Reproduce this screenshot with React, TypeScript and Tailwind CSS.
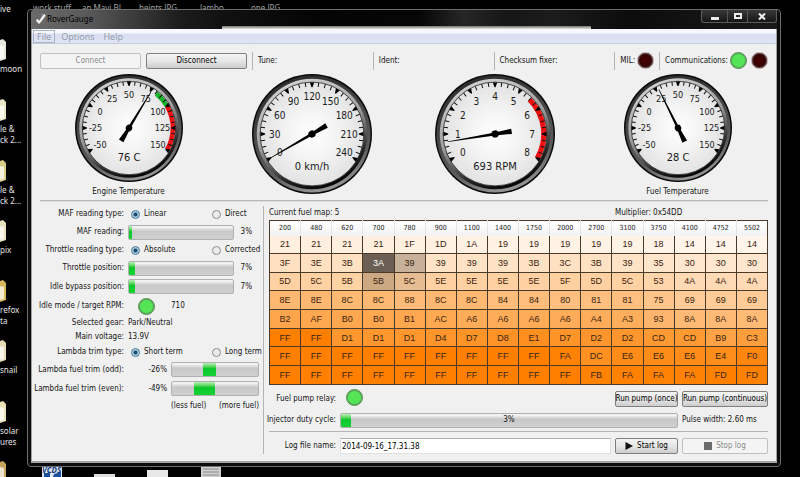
import type { ReactNode } from "react";

const UI = "font-['DejaVu_Sans_Condensed','Liberation_Sans',sans-serif]";

/* ---------- gauges ---------- */

type Band = { from: number; to: number; color: string };
type GaugeProps = {
  id: string;
  size: number;
  min: number;
  step: number;
  value: number;
  text: string;
  labelSize: number;
  bands?: Band[];
};

function polar(r: number, deg: number) {
  const a = ((deg - 90) * Math.PI) / 180;
  return { x: r * Math.cos(a), y: r * Math.sin(a) };
}

function bandPath(r1: number, r2: number, a: number, b: number) {
  const p = [polar(r2, a), polar(r2, b), polar(r1, b), polar(r1, a)];
  return `M${p[0].x} ${p[0].y} A${r2} ${r2} 0 0 1 ${p[1].x} ${p[1].y} L${p[2].x} ${p[2].y} A${r1} ${r1} 0 0 0 ${p[3].x} ${p[3].y} Z`;
}

function Gauge({ id, size, min, step, value, text, labelSize, bands = [] }: GaugeProps) {
  const R = size / 2;
  const angle = (v: number) => -120 + ((v - min) / step) * 30;
  const ticks = Array.from({ length: 33 }, (_, i) => i);
  const majors = Array.from({ length: 9 }, (_, i) => min + i * step);
  return (
    <svg width={size} height={size} viewBox={`${-R} ${-R} ${size} ${size}`} role="img" aria-label={text}>
      <defs>
        <linearGradient id={`${id}-rim`} x1="0.35" y1="0" x2="0.65" y2="1">
          <stop offset="0" stopColor="#2c2c2c" />
          <stop offset="0.45" stopColor="#4a4a4a" />
          <stop offset="0.75" stopColor="#5c5c5c" />
          <stop offset="1" stopColor="#9c9c9c" />
        </linearGradient>
        <linearGradient id={`${id}-bezel`} x1="0.3" y1="0" x2="0.7" y2="1">
          <stop offset="0" stopColor="#d2d2d2" />
          <stop offset="0.45" stopColor="#a0a0a0" />
          <stop offset="0.8" stopColor="#202020" />
          <stop offset="1" stopColor="#000000" />
        </linearGradient>
        <radialGradient id={`${id}-face`}>
          <stop offset="0" stopColor="#ffffff" />
          <stop offset="0.5" stopColor="#f3f3f3" />
          <stop offset="1" stopColor="#e2e2e2" />
        </radialGradient>
      </defs>
      <circle r={R} fill="#0a0a0a" />
      <circle r={R - 1.5} fill={`url(#${id}-rim)`} />
      <circle r={R * 0.92} fill={`url(#${id}-bezel)`} />
      <circle r={R * 0.865} fill={`url(#${id}-face)`} stroke="#222" strokeWidth="0.8" />
      {bands.map((b) => (
        <path key={b.from} d={bandPath(R * 0.77, R * 0.855, angle(b.from), angle(b.to))} fill={b.color} />
      ))}
      {ticks.map((i) => (
        <g key={i} transform={`rotate(${-120 + i * 7.5})`}>
          {i % 4 === 0 ? (
            <path d={`M-2.2 ${-R * 0.86} L2.2 ${-R * 0.86} L0.5 ${-R * 0.78} L-0.5 ${-R * 0.78} Z`} fill="#000" />
          ) : (
            <path d={`M0 ${-R * 0.86} V${-R * 0.79}`} stroke="#111" strokeWidth="1" />
          )}
        </g>
      ))}
      <g className={UI} fill="#1a1a1a" textAnchor="middle">
        {majors.map((m) => {
          const p = polar(R * 0.62, angle(m));
          return (
            <text key={m} x={p.x} y={p.y + labelSize * 0.36} fontSize={labelSize}>
              {m}
            </text>
          );
        })}
        <text y={R * 0.54 + 4} fontSize="11">
          {text}
        </text>
      </g>
      <g transform={`rotate(${angle(value)})`} fill="#000">
        <path d={`M-0.3 ${-R * 0.8} L0.3 ${-R * 0.8} L1.4 0 L2.6 ${R * 0.28} L-2.6 ${R * 0.28} L-1.4 0 Z`} />
        <circle r={R * 0.06} />
      </g>
    </svg>
  );
}

/* ---------- small controls ---------- */

function Led({ on }: { on?: boolean }) {
  return (
    <span
      className={`inline-block size-[17px] shrink-0 rounded-full border ${
        on
          ? "border-[#5c8a5c] bg-[#55e455] ring-1 ring-inset ring-[#5aa85a]"
          : "border-[#b9a5a5] bg-[radial-gradient(circle,#4a0000,#250000)] ring-1 ring-inset ring-[#5c4444]"
      }`}
    />
  );
}

function Btn({ children, disabled, className = "" }: { children: ReactNode; disabled?: boolean; className?: string }) {
  return (
    <button
      type="button"
      disabled={disabled}
      className={`flex h-4 items-center justify-center rounded-[2px] border whitespace-nowrap ${
        disabled
          ? "border-[#c0c0c0] bg-[#f4f4f4] text-[#8a8a8a]"
          : "border-[#808080] bg-linear-to-b from-[#f4f4f4] via-[#e6e6e6] to-[#cdcdcd] text-black"
      } ${className}`}
    >
      {children}
    </button>
  );
}

function Bar({ start = 0, width, label, children }: { start?: number; width: number; label: string; children?: ReactNode }) {
  return (
    <div
      role="progressbar"
      aria-label={label}
      className="relative h-[15px] flex-1 overflow-hidden rounded-[2px] border border-[#b0b0b0] bg-linear-to-b from-[#f2f2f2] from-10% via-[#c8c8c8] via-40% to-[#d0d0d0]"
    >
      <div
        className="absolute inset-y-0 bg-linear-to-b from-[#b4f0b4] via-[#0cc82c] via-40% to-[#14d234]"
        style={{ left: `${start}%`, width: `${width}%` }}
      />
      <div className="absolute inset-0 flex items-center justify-center">{children}</div>
    </div>
  );
}

function Row({ label, h, children }: { label: string; h: string; children: ReactNode }) {
  return (
    <div className={`flex items-center gap-1 ${h}`}>
      <span className="flex w-[84px] shrink-0 justify-end whitespace-nowrap">{label}</span>
      <div className="flex flex-1 items-center">{children}</div>
    </div>
  );
}

function Choice({ name, first, second }: { name: string; first: string; second: string }) {
  const dot =
    "size-[9px] shrink-0 appearance-none rounded-full border border-[#8c8c8c] bg-[#ececec] checked:border-[#4b7896] checked:bg-[radial-gradient(circle,#1d4a6b_30%,#a9d2e8_50%)]";
  return (
    <div className="flex flex-1 pl-[3px]">
      <label className="flex w-[81px] items-center gap-1 whitespace-nowrap">
        <input type="radio" name={name} defaultChecked className={dot} />
        {first}
      </label>
      <label className="flex items-center gap-1 whitespace-nowrap">
        <input type="radio" name={name} className={dot} />
        {second}
      </label>
    </div>
  );
}

function Divider() {
  return <span className="h-[18px] w-px shrink-0 bg-[#b4b4b4]" />;
}

/* ---------- fuel map ---------- */

const rpm = "200 480 620 700 780 900 1100 1400 1750 2000 2700 3100 3750 4100 4752 5502".split(" ");
const fuel = [
  "21 21 21 21 1F 1D 1A 19 19 19 19 19 18 14 14 14",
  "3F 3E 3B 3A 39 39 39 39 3B 3C 3B 39 35 30 30 30",
  "5D 5C 5B 5B 5C 5E 5E 5E 5E 5F 5D 5C 53 4A 4A 4A",
  "8E 8E 8C 8C 88 8C 8C 84 84 80 81 81 75 69 69 69",
  "B2 AF B0 B0 B1 AC A6 A6 A6 A6 A4 A3 93 8A 8A 8A",
  "FF FF D1 D1 D1 D4 D7 D8 E1 D7 D2 D2 CD CD B9 C3",
  "FF FF FF FF FF FF FF FF FF FA DC E6 E6 E6 E4 F0",
  "FF FF FF FF FF FF FF FF FF FF FB FA FA FA FD FD",
].map((r) => r.split(" "));

const shade: Record<string, number> = { "1-3": 0.58, "1-4": 0.22, "2-3": 0.2, "2-4": 0.1 };

function cellStyle(hex: string, key: string) {
  const v = parseInt(hex, 16);
  const k = 1 - (shade[key] ?? 0);
  const c = [255 * k, (255 - v / 2) * k, (255 - v) * k].map(Math.round);
  return { backgroundColor: `rgb(${c.join(",")})` };
}

function FuelMap() {
  return (
    <table className="h-[165px] w-full table-fixed border-collapse border border-[#4a3a2a]">
      <thead>
        <tr className="h-[15px] text-[7px] leading-[8px] text-[#222]">
          {rpm.map((r) => (
            <th key={r} className="border-r border-[#e4e4e4] bg-linear-to-b from-white to-[#f1f1f4] p-0 font-normal last:border-[#4a3a2a]">
              {r}
            </th>
          ))}
        </tr>
      </thead>
      <tbody className="font-['Liberation_Sans',Arial,sans-serif] text-[9px] leading-[10px] text-[#3a2410]">
        {fuel.map((row, y) => (
          <tr key={y}>
            {row.map((v, x) => (
              <td
                key={x}
                className={`border border-[#4a3a2a] p-0 text-center ${y === 0 ? "border-t-0" : ""} ${y === 1 && x === 3 ? "text-white" : ""}`}
                style={cellStyle(v, `${y}-${x}`)}
              >
                {v}
              </td>
            ))}
          </tr>
        ))}
      </tbody>
    </table>
  );
}

/* ---------- desktop behind the window ---------- */

function Folder({ top, tone }: { top: string; tone: string }) {
  return (
    <svg className={`absolute left-0 ${top}`} width="7" height="22" viewBox="0 0 7 22">
      <path d="M0 1 L3 0 L6 3 V20 L0 22 Z" fill={tone} />
      <path d="M0 6 L4 7 V19 L0 20 Z" fill="#fff" opacity="0.7" />
    </svg>
  );
}

function Desktop() {
  const left: [string, string][] = [
    ["top-[3px]", "ive"],
    ["top-[63px]", "moon"],
    ["top-[123px]", "le &"],
    ["top-[134px]", "ck 2..."],
    ["top-[184px]", "le &"],
    ["top-[195px]", "ck 2..."],
    ["top-[244px]", "pix"],
    ["top-[304px]", "refox"],
    ["top-[315px]", "ta"],
    ["top-[364px]", "snail"],
    ["top-[425px]", "solar"],
    ["top-[436px]", "ures"],
  ];
  const top: [string, string][] = [
    ["left-[33px]", "work stuff"],
    ["left-[82px]", "an Mavi BL"],
    ["left-[139px]", "heints JPG"],
    ["left-[200px]", "lambo"],
    ["left-[251px]", "one JPG"],
  ];
  return (
    <div className="absolute inset-0 overflow-hidden font-['Noto_Sans','Open_Sans',sans-serif] text-[8px] leading-[11px] whitespace-nowrap text-[#e4e4e4]">
      {left.map(([pos, t]) => (
        <span key={pos} className={`absolute left-0 ${pos}`}>
          {t}
        </span>
      ))}
      {top.map(([pos, t]) => (
        <span key={pos} className={`absolute top-[2px] text-[#a0a0a0] ${pos}`}>
          {t}
        </span>
      ))}
      <Folder top="top-[39px]" tone="#e6e6dc" />
      <Folder top="top-[99px]" tone="#e9e6c8" />
      <Folder top="top-[160px]" tone="#d8cc8a" />
      <Folder top="top-[220px]" tone="#e6e2c0" />
      <Folder top="top-[280px]" tone="#d9b85c" />
      <Folder top="top-[340px]" tone="#e6ddb8" />
      <Folder top="top-[401px]" tone="#e9e2b8" />
      <Folder top="top-[461px]" tone="#c8a860" />
      <svg className="absolute top-[464px] left-[41px]" width="180" height="13" viewBox="0 0 180 13">
        <path d="M1 2 H21 V13 H1 Z" fill="#dfe8f2" />
        <path d="M3 9 H9 V13 H3 Z M13 10 L20 8 V13 H12 Z" fill="#1c4f9c" />
        <path d="M53 10 H74 V13 H53 Z" fill="#dedede" />
        <path d="M106 6 H127 V13 H106 Z" fill="#e8e8e8" />
        <path d="M160 2 H180 V13 H160 Z" fill="#d0d0d0" />
        <path d="M162 5 H178 M162 8 H178 M162 11 H178" stroke="#8a8a8a" />
      </svg>
      <span className="absolute top-[464px] left-[42px] font-bold text-[#123a7a] italic">VCDS</span>
    </div>
  );
}

/* ---------- window chrome ---------- */

function TitleBar() {
  const ctl = "flex h-[12px] items-center justify-center border-r border-[#555] last:border-r-0";
  return (
    <div className="relative flex h-[19px] items-start rounded-t-[3px] bg-[linear-gradient(90deg,#6a6a6a_0,#585858_8%,#1c1c1c_20%,#101010_26%,#050505_38%,#060606_52%,#262626_58%,#161616_64%,#1c1c1c_70%,#0c0c0c_80%,#1a1a1a)] pl-1">
      <div className="absolute right-[186px] bottom-0 left-[191px] h-[3px] bg-linear-to-b from-[#77716c] to-[#e6e6e6]" />
      <svg className="mt-[3px]" width="11" height="12" viewBox="0 0 11 12">
        <path d="M1 7 L3 6 L4 8 L8 2 L10 1 L10.500 3 L6 9 L4 11 L2 9 Z" fill="#f4f4f4" />
        <path d="M6 1 L9 0.500 L7 3 Z" fill="#8a8a8a" />
      </svg>
      <h1 className="mt-[2px] ml-px font-['Noto_Sans','Open_Sans',sans-serif] text-[8px] leading-[13px] text-black">RoverGauge</h1>
      <div className="ml-auto flex overflow-hidden rounded-b-[3px] border border-t-0 border-[#5c5c5c] bg-linear-to-b from-[#3a3a3a] to-[#161616]">
        <button type="button" aria-label="Minimize" className={`${ctl} w-[26px]`}>
          <span className="mt-1 h-[3px] w-2 bg-[#eee]" />
        </button>
        <button type="button" aria-label="Maximize" className={`${ctl} w-5`}>
          <span className="h-[6px] w-2 border-2 border-[#eee]" />
        </button>
        <button type="button" aria-label="Close" className={`${ctl} w-7`}>
          <svg width="8" height="7" viewBox="0 0 8 7">
            <path d="M1 0.500 L7 6.500 M7 0.500 L1 6.500" stroke="#eee" strokeWidth="2" />
          </svg>
        </button>
      </div>
    </div>
  );
}

function MenuBar() {
  return (
    <nav className="flex h-[15px] items-center border-b border-[#c2cbdf] bg-linear-to-b from-[#f6f8fd] from-25% via-[#d9dff2] via-40% to-[#dfe5f4] pl-px font-['Open_Sans','Noto_Sans',sans-serif] text-[9px] leading-[11px] text-[#8f96a4]">
      <button type="button" className="h-[13px] border border-[#aab2c4] px-[3px]">File</button>
      <button type="button" className="h-[13px] px-[6px]">Options</button>
      <button type="button" className="h-[13px] px-[3px]">Help</button>
    </nav>
  );
}

/* ---------- application ---------- */

export default function App() {
  return (
    <div className={`relative min-h-screen overflow-hidden bg-black pt-[9px] pr-[19px] pb-[10px] pl-[27px] text-[8px] leading-[10px] text-[#141414] ${UI}`}>
      <Desktop />
      <div className="relative rounded-[4px] border border-[#6e6e6e] bg-[#0c0c0c] px-[3px] pb-[3px]">
        <TitleBar />
        <div className="border-x border-b-2 border-[#a2a2a2] bg-[#f0f0f0]">
          <MenuBar />

          <div className="flex h-[30px] items-center gap-[5px] px-2 pt-[3px]">
            <Btn disabled className="w-[101px]">Connect</Btn>
            <Btn className="w-[101px]">Disconnect</Btn>
            <Divider />
            <span className="flex-1">Tune:</span>
            <Divider />
            <span className="flex-1">Ident:</span>
            <Divider />
            <span className="flex-1 whitespace-nowrap">Checksum fixer:</span>
            <Divider />
            <div className="flex items-center gap-[2px]">
              MIL: <Led />
            </div>
            <Divider />
            <div className="flex items-center">
              Communications:
              <span className="flex gap-1 pl-[2px]">
                <Led on /> <Led />
              </span>
            </div>
          </div>

          <div className="grid grid-cols-4 items-start justify-items-center pr-[7px] pl-[5px]">
            <div className="flex flex-col items-center gap-[5px]">
              <Gauge
                id="engine"
                size={108}
                min={-50}
                step={25}
                value={76}
                text="76 C"
                labelSize={9}
                bands={[
                  { from: 82, to: 100, color: "#18b428" },
                  { from: 100, to: 150, color: "#ee1010" },
                ]}
              />
              Engine Temperature
            </div>
            <Gauge id="speed" size={120} min={0} step={30} value={0} text="0 km/h" labelSize={10} />
            <Gauge
              id="rpm"
              size={120}
              min={0}
              step={1}
              value={0.693}
              text="693 RPM"
              labelSize={10}
              bands={[{ from: 5.5, to: 8, color: "#ee1010" }]}
            />
            <div className="flex flex-col items-center gap-[5px]">
              <Gauge id="fuel" size={108} min={-50} step={25} value={28} text="28 C" labelSize={9} />
              Fuel Temperature
            </div>
          </div>

          <div className="px-2 pb-[7px]">
            <div className="mt-[3px] h-[2px] border-t border-[#b8b8b8] bg-[#dcdcdc]" />
            <div className="flex pt-px">
              <section className="w-[219px] shrink-0 pt-[2px]">
                <Row label="MAF reading type:" h="h-[18px]">
                  <Choice name="maf" first="Linear" second="Direct" />
                </Row>
                <Row label="MAF reading:" h="h-[18px]">
                  <Bar label="MAF reading" width={3} />
                  <span className="w-[25px] pr-[7px] text-right">3%</span>
                </Row>
                <Row label="Throttle reading type:" h="h-[18px]">
                  <Choice name="throttle" first="Absolute" second="Corrected" />
                </Row>
                <Row label="Throttle position:" h="h-[18px]">
                  <Bar label="Throttle position" width={6} />
                  <span className="w-[25px] pr-[7px] text-right">7%</span>
                </Row>
                <Row label="Idle bypass position:" h="h-[19px]">
                  <Bar label="Idle bypass position" width={6} />
                  <span className="w-[25px] pr-[7px] text-right">7%</span>
                </Row>
                <Row label="Idle mode / target RPM:" h="h-5">
                  <span className="ml-[10px] flex items-center gap-4">
                    <Led on /> 710
                  </span>
                </Row>
                <Row label="Selected gear:" h="h-[14px]">Park/Neutral</Row>
                <Row label="Main voltage:" h="h-[14px]">13.9V</Row>
                <Row label="Lambda trim type:" h="h-4">
                  <Choice name="lambda" first="Short term" second="Long term" />
                </Row>
                <Row label="Lambda fuel trim (odd):" h="h-[19px]">
                  <span className="w-[43px] pr-1 text-right">-26%</span>
                  <Bar label="Lambda fuel trim (odd)" start={36} width={15} />
                </Row>
                <Row label="Lambda fuel trim (even):" h="h-[19px]">
                  <span className="w-[43px] pr-1 text-right">-49%</span>
                  <Bar label="Lambda fuel trim (even)" start={25} width={25} />
                </Row>
                <div className="ml-[131px] flex h-[16px] items-center justify-between whitespace-nowrap">
                  <span>(less fuel)</span>
                  <span>(more fuel)</span>
                </div>
              </section>

              <div className="mt-[3px] mr-[5px] ml-1 w-px bg-[#b4b4b4]" />

              <section className="min-w-0 flex-1 pt-[3px]">
                <div className="flex h-[14px] items-center">
                  <span className="w-[346px]">Current fuel map: 5</span>
                  <span>Multiplier: 0x54DD</span>
                </div>
                <FuelMap />

                <div className="flex h-[27px] items-center gap-1">
                  <span className="flex w-[67px] justify-end whitespace-nowrap">Fuel pump relay:</span>
                  <span className="flex-1 pl-[6px]">
                    <Led on />
                  </span>
                  <Btn className="w-[63px]">Run pump (once)</Btn>
                  <Btn className="w-[86px]">Run pump (continuous)</Btn>
                </div>
                <div className="flex h-4 items-center gap-1">
                  <span className="flex w-[67px] justify-end whitespace-nowrap">Injector duty cycle:</span>
                  <Bar label="Injector duty cycle" width={3}>
                    3%
                  </Bar>
                  <span className="w-[86px] whitespace-nowrap">Pulse width: 2.60 ms</span>
                </div>
                <div className="mt-[3px] h-px bg-[#b4b4b4]" />
                <div className="mt-[6px] flex items-center gap-1">
                  <label htmlFor="logfile" className="flex w-[67px] justify-end whitespace-nowrap">Log file name:</label>
                  <input
                    id="logfile"
                    defaultValue="2014-09-16_17.31.38"
                    className="h-4 min-w-0 flex-1 border border-[#e0e0e0] border-t-[#b0b0b0] bg-white px-px text-black"
                  />
                  <Btn className="w-[63px] gap-1">
                    <svg width="8" height="8" viewBox="0 0 8 8">
                      <path d="M0.500 0 L8 4 L0.500 8 Z" fill="#111" />
                    </svg>
                    Start log
                  </Btn>
                  <Btn disabled className="w-[86px] gap-1">
                    <span className="size-2 bg-[#6c6c6c]" />
                    Stop log
                  </Btn>
                </div>
              </section>
            </div>
          </div>
        </div>
      </div>
    </div>
  );
}
